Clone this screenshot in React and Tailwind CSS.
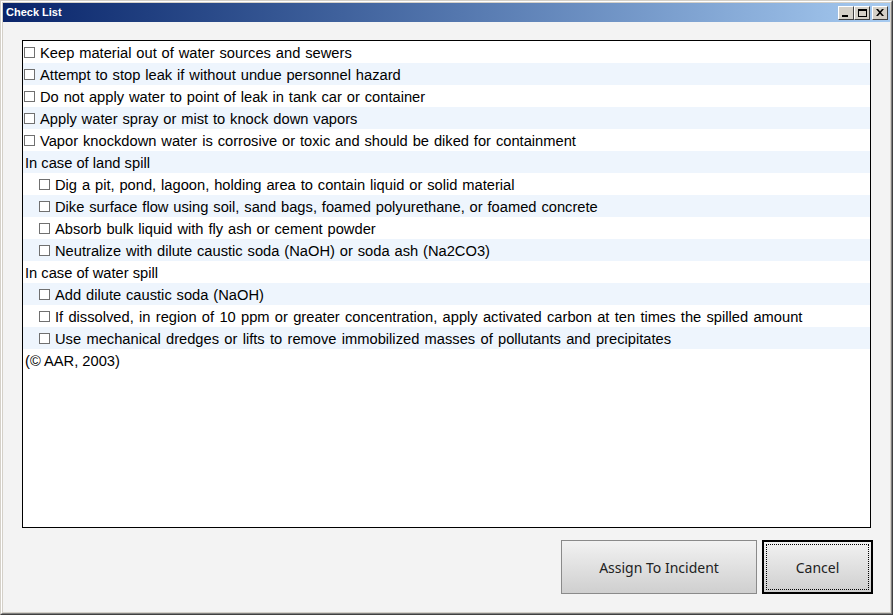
import React from 'react';

const items = [
  { kind: 'check', level: 0, text: 'Keep material out of water sources and sewers' },
  { kind: 'check', level: 0, text: 'Attempt to stop leak if without undue personnel hazard' },
  { kind: 'check', level: 0, text: 'Do not apply water to point of leak in tank car or container' },
  { kind: 'check', level: 0, text: 'Apply water spray or mist to knock down vapors' },
  { kind: 'check', level: 0, text: 'Vapor knockdown water is corrosive or toxic and should be diked for containment' },
  { kind: 'head', text: 'In case of land spill' },
  { kind: 'check', level: 1, text: 'Dig a pit, pond, lagoon, holding area to contain liquid or solid material' },
  { kind: 'check', level: 1, text: 'Dike surface flow using soil, sand bags, foamed polyurethane, or foamed concrete' },
  { kind: 'check', level: 1, text: 'Absorb bulk liquid with fly ash or cement powder' },
  { kind: 'check', level: 1, text: 'Neutralize with dilute caustic soda (NaOH) or soda ash (Na2CO3)' },
  { kind: 'head', text: 'In case of water spill' },
  { kind: 'check', level: 1, text: 'Add dilute caustic soda (NaOH)' },
  { kind: 'check', level: 1, wide: true, text: 'If dissolved, in region of 10 ppm or greater concentration, apply activated carbon at ten times the spilled amount' },
  { kind: 'check', level: 1, wide: true, text: 'Use mechanical dredges or lifts to remove immobilized masses of pollutants and precipitates' },
  { kind: 'head', text: '(\u00A9 AAR, 2003)' },
];

const CaptionButton = ({ children }) => (
  <div className="w-[16px] h-[14px] bg-[#d4d0c8] border border-t-white border-l-white border-r-[#404040] border-b-[#404040] flex items-center justify-center">
    {children}
  </div>
);

const Row = ({ item, index }) => {
  const shaded = index % 2 === 1;
  return (
    <div className={`h-[22px] pt-[2px] flex items-center ${shaded ? 'bg-[#eef5fd]' : 'bg-white'}`}>
      {item.kind === 'head' ? (
        <span className="pl-[2px]">{item.text}</span>
      ) : (
        <div className={`flex items-center ${item.level === 1 ? 'pl-[16px]' : 'pl-[1px]'}`}>
          <span className="w-[11px] h-[11px] border border-[#707070] bg-white shrink-0" />
          <span className={`pl-[5px] whitespace-nowrap ${item.wide ? '[word-spacing:1.2px]' : '[word-spacing:0.8px]'}`}>{item.text}</span>
        </div>
      )}
    </div>
  );
};

export default function App() {
  return (
    <div className="w-[893px] h-[615px] bg-[#d4d0c8] border border-t-[#d4d0c8] border-l-[#d4d0c8] border-r-[#404040] border-b-[#404040]">
      <div className="h-full border border-t-white border-l-white border-r-[#808080] border-b-[#808080] p-px flex flex-col">
        {/* Title bar */}
        <div className="h-[19px] shrink-0 flex items-center justify-between pl-[3px] pr-[2px] bg-gradient-to-r from-[#0a246a] to-[#a6caf0]">
          <span className="text-white font-bold text-[11px] font-['Liberation_Sans',Arial,sans-serif]">Check List</span>
          <div className="flex items-center">
            <CaptionButton>
              <span className="w-[6px] h-[2px] bg-black mt-[6px] -ml-[2px]" />
            </CaptionButton>
            <CaptionButton>
              <span className="w-[9px] h-[8px] border border-black border-t-2" />
            </CaptionButton>
            <div className="w-[2px]" />
            <CaptionButton>
              <svg width="8" height="7" viewBox="0 0 8 7">
                <path d="M0 0h2l2 2.2L6 0h2L5 3.5 8 7H6L4 4.8 2 7H0l3-3.5z" fill="#000" />
              </svg>
            </CaptionButton>
          </div>
        </div>

        {/* Client area */}
        <div className="flex-1 bg-[#f3f3f3] flex flex-col pt-[18px] pl-[19px] pr-[19px] pb-[16px]">
          <div className="h-[488px] border border-black bg-white text-[14.7px] text-black font-['Liberation_Sans',Arial,sans-serif] leading-none">
            {items.map((item, i) => (
              <Row key={i} item={item} index={i} />
            ))}
          </div>

          <div className="flex justify-end gap-[5px] mt-[12px] mr-[-2px]">
            <button className="w-[196px] h-[54px] border border-[#8a8a8a] bg-gradient-to-b from-[#f2f2f2] to-[#cfcfcf] text-[14px] text-[#222] font-['Noto_Sans',sans-serif]">
              Assign To Incident
            </button>
            <button className="w-[111px] h-[54px] border-2 border-black bg-gradient-to-b from-[#f2f2f2] to-[#cfcfcf] p-[2px] text-[14px] text-[#222] font-['Noto_Sans',sans-serif]">
              <div className="w-full h-full border border-dotted border-black flex items-center justify-center">
                Cancel
              </div>
            </button>
          </div>
        </div>
      </div>
    </div>
  );
}
